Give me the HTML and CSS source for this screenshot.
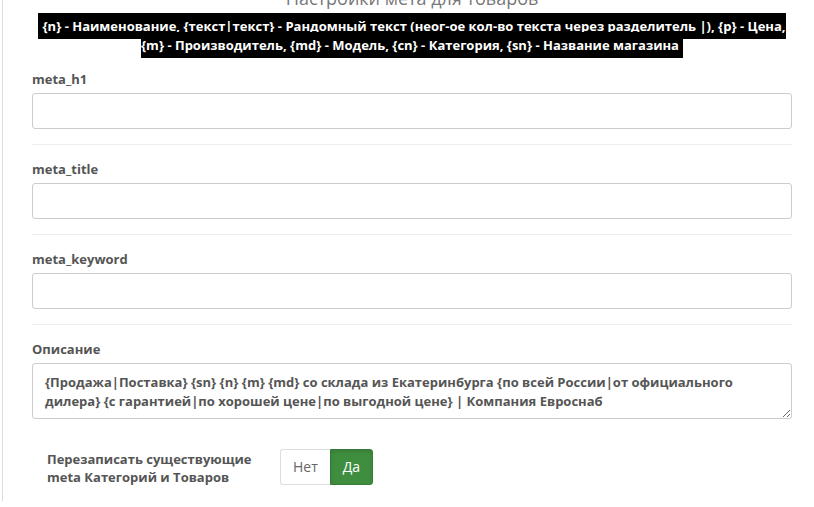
FILE: index.html
```html
<!DOCTYPE html>
<html lang="ru">
<head>
  <meta charset="UTF-8">
  <meta name="viewport" content="width=device-width, initial-scale=1.0">
  <title>Настройки мета для товаров</title>
  <link rel="stylesheet" href="styles.css">
</head>
<body>
  <div class="page">
    <h3 class="page-title">Настройки мета для товаров</h3>
    <p class="hint"><span class="hint-text">{n} - Наименование, {текст|текст} - Рандомный текст (неог-ое кол-во текста через разделитель |), {p} - Цена, {m} - Производитель, {md} - Модель, {cn} - Категория, {sn} - Название магазина </span></p>

    <div class="form-group">
      <label class="control-label" for="meta-h1">meta_h1</label>
      <input type="text" id="meta-h1" class="form-control">
    </div>

    <div class="form-group">
      <label class="control-label" for="meta-title">meta_title</label>
      <input type="text" id="meta-title" class="form-control">
    </div>

    <div class="form-group">
      <label class="control-label" for="meta-keyword">meta_keyword</label>
      <input type="text" id="meta-keyword" class="form-control">
    </div>

    <div class="form-group">
      <label class="control-label" for="meta-description">Описание</label>
      <textarea id="meta-description" class="form-control description">{Продажа|Поставка} {sn} {n} {m} {md} со склада из Екатеринбурга {по всей России|от официального дилера} {с гарантией|по хорошей цене|по выгодной цене} | Компания Евроснаб</textarea>
    </div>

    <div class="form-group switch-row">
      <label class="switch-label">Перезаписать существующие meta Категорий и Товаров</label>
      <div class="btn-group">
        <button type="button" class="btn btn-default">Нет</button><button type="button" class="btn btn-success">Да</button>
      </div>
    </div>
  </div>
</body>
</html>
```

FILE: styles.css
```css
body {
  font-family: "Open Sans", "Noto Sans", sans-serif;
  margin: 0;
  color: #555;
  background: #fff;
  overflow: hidden;
}
.page {
  margin-left: 2px;
  border-left: 1px solid #ddd;
  min-height: 507px;
  padding: 0 22px 0 29px;
}
.page-title {
  margin: -12px 0 0;
  font-size: 18px;
  line-height: 20px;
  font-weight: 400;
  color: #777;
  text-align: center;
}
.hint {
  margin: 9px 0 0;
  font-size: 13px;
  line-height: 19px;
  font-weight: 700;
  text-align: center;
}
.hint-text {
  background: #000;
  color: #fff;
  padding: 4px;
}
.form-group {
  padding: 15px 0;
}
.form-group + .form-group {
  border-top: 1px solid #ededed;
}
.control-label {
  display: block;
  font-size: 13px;
  line-height: 18px;
  font-weight: 700;
  margin-bottom: 5px;
}
.form-control {
  display: block;
  width: 100%;
  box-sizing: border-box;
  height: 36px;
  padding: 6px 12px;
  border: 1px solid #ccc;
  border-radius: 3px;
  background: #fff;
  font-family: "Open Sans", "Noto Sans", sans-serif;
  font-size: 13px;
  color: #555;
}
.description {
  height: 56px;
  padding: 9px 13px 5px 12px;
  line-height: 19px;
  font-size: 13px;
  font-weight: 700;
  resize: vertical;
}
.form-group.switch-row {
  border-top: none;
  display: flex;
  align-items: flex-start;
}
.switch-label {
  flex: 0 0 248px;
  box-sizing: border-box;
  padding: 1px 15px 0 15px;
  font-size: 13px;
  line-height: 18px;
  font-weight: 700;
}
.btn-group {
  display: flex;
}
.btn {
  height: 36px;
  padding: 0 12px;
  font-family: "Open Sans", "Noto Sans", sans-serif;
  font-size: 14px;
  line-height: 34px;
  cursor: pointer;
}
.btn-default {
  background: #fff;
  color: #666;
  border: 1px solid #ddd;
  border-right: none;
  border-radius: 3px 0 0 3px;
}
.btn-success {
  background: #3f8e3f;
  color: #fff;
  border: 1px solid #367c36;
  border-radius: 0 3px 3px 0;
  box-shadow: inset 0 2px 4px rgba(0, 0, 0, 0.12);
}
```
